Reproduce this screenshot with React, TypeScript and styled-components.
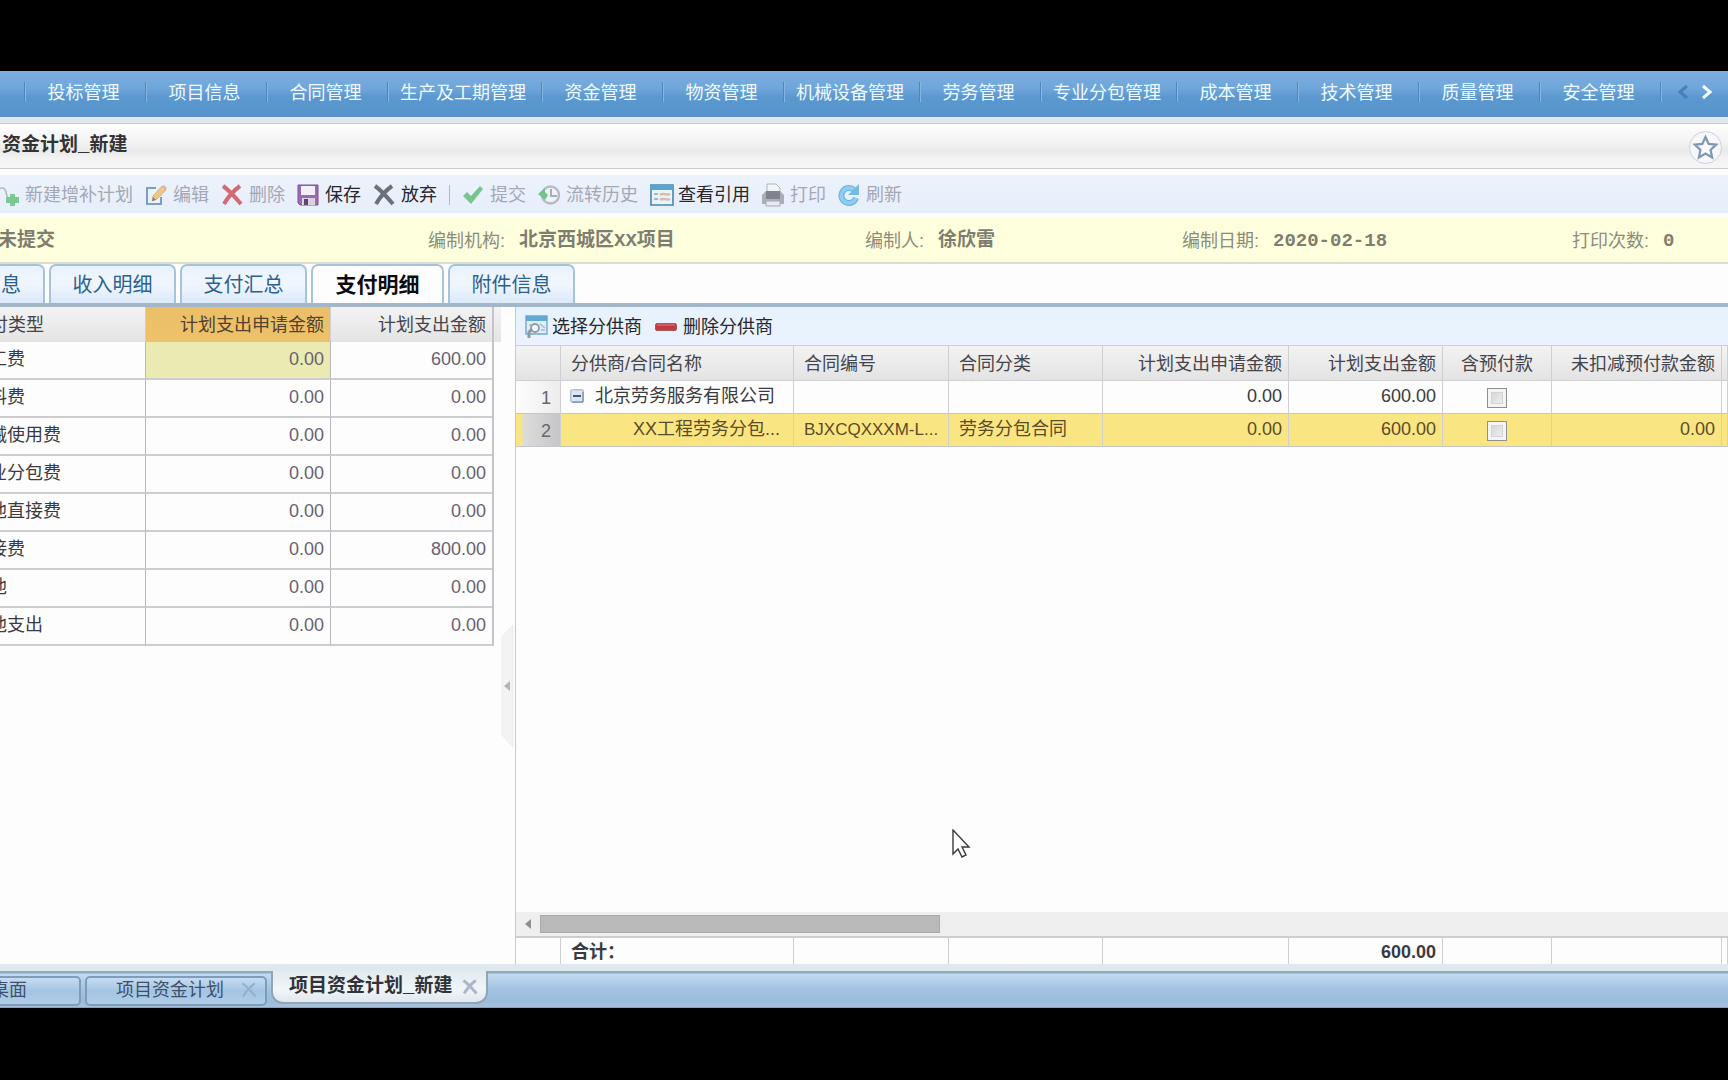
import React from "react";
import styled, { createGlobalStyle, css } from "styled-components";

const GlobalStyle = createGlobalStyle`
  * { box-sizing: border-box; }
  html, body { margin: 0; background: #000; overflow: hidden; }
  button, input { font: inherit; color: inherit; margin: 0; }
`;

const sans = `"Liberation Sans", "Noto Sans CJK SC", sans-serif`;
const mono = `"Liberation Mono", "Noto Sans CJK SC", monospace`;

const Screen = styled.div`
  position: relative;
  min-height: 100vh;
  padding: 71px 0 72px;
  display: flex;
  flex-direction: column;
  overflow: hidden;
  background: #000;
  font: 18px/24px ${sans};
  color: #3a3a40;
  white-space: nowrap;
`;

/* The window is scrolled slightly to the right, so its left edge is cut. */
const Frame = styled.div`
  flex: 1;
  margin-left: -16px;
  display: flex;
  flex-direction: column;
  background: #fdfdfe;
`;

const Nav = styled.nav`
  height: 46px;
  flex: none;
  display: flex;
  align-items: center;
  padding: 0 8px 2px 40px;
  background: linear-gradient(#7caee0 0, #6ea5da 18px, #5b98d0 26px, #5795cd 100%);
  border-bottom: 2px solid #5f90bf;
  overflow: hidden;
`;

const navCell = css`
  height: 20px;
  border-left: 1px solid #4f86bb;
  box-shadow: inset 1px 0 0 #86b5e2;
`;

const NavLink = styled.a`
  ${navCell}
  flex: none;
  min-width: 121px;
  padding: 0 15px 0 12px;
  line-height: 22px;
  text-align: center;
  text-decoration: none;
  color: #eefaff;
`;

const NavArrows = styled.div`
  ${navCell}
  flex: 1;
  display: flex;
  align-items: center;
  padding-left: 10px;
`;

const IconButton = styled.button`
  border: 0;
  padding: 0;
  background: none;
  display: flex;
  flex: none;
`;

const ArrowButton = styled(IconButton)`
  width: 24px;
  justify-content: center;
`;

const TitleBar = styled.header`
  flex: none;
  margin: 0;
  border-top: 6px solid #e0e7f1;
  background: #fdfdfe;
  padding-bottom: 6px;
`;

const TitleInner = styled.div`
  height: 46px;
  display: flex;
  align-items: center;
  justify-content: space-between;
  padding: 0 6px 0 18px;
  border-top: 1px solid #c9cbd0;
  border-bottom: 1px solid #c9cbd0;
  background: linear-gradient(#fefefe 0, #f3f3f4 18px, #e9e9ea 27px, #f3f3f4 34px, #f6f6f7 100%);
`;

const Title = styled.h1`
  margin: 0;
  font: bold 19px/24px ${mono};
  color: #333;
`;

const StarButton = styled(IconButton)`
  width: 33px;
  height: 33px;
  align-items: center;
  justify-content: center;
  border: 1px solid #ccd1dc;
  border-radius: 50%;
  background: #f5f7fb;
  margin-top: 2px;
`;

const Toolbar = styled.div`
  height: 38px;
  flex: none;
  display: flex;
  align-items: center;
  gap: 12px;
  padding: 2px 13px 0;
  background: linear-gradient(#edf3fc, #e6eefb);
`;

const ToolButton = styled.button<{ $wide?: boolean }>`
  border: 0;
  padding: 0;
  background: none;
  flex: none;
  display: flex;
  align-items: center;
  gap: ${(p) => (p.$wide ? 4 : 6)}px;
  color: #26262c;
  &:disabled { color: #a3a8b4; }
  &:disabled svg { opacity: 0.7; }
`;

const Divider = styled.span`
  width: 1px;
  height: 20px;
  background: #b4b9c4;
`;

const InfoBar = styled.dl`
  margin: 5px 0 0;
  height: 46px;
  flex: none;
  display: grid;
  grid-template-columns: 430fr 437fr 317fr 390fr 156fr;
  align-items: center;
  padding: 1px 0 0 14px;
  background: #feffdc;
  border-bottom: 2px solid #dcdccf;
  color: #8c8c7c;
`;

const InfoItem = styled.div`
  display: flex;
  gap: 14px;
`;

const InfoLabel = styled.dt``;

const InfoValue = styled.dd`
  margin: 0;
  font: bold 19px/24px ${mono};
  color: #7e7e70;
`;

const Tabs = styled.div`
  height: 43px;
  flex: none;
  display: flex;
  align-items: flex-end;
  gap: 4px;
  border-bottom: 4px solid #a3b7c8;
  background: #fdfdfe;
`;

const Tab = styled.button<{ $active?: boolean; $first?: boolean }>`
  height: 39px;
  flex: none;
  width: ${(p) => (p.$first ? 61 : p.$active ? 133 : 127)}px;
  padding: 0 ${(p) => (p.$first ? 22 : 0)}px 0 0;
  text-align: ${(p) => (p.$first ? "right" : "center")};
  border: 2px solid #a5c3da;
  border-bottom: 0;
  border-radius: 7px 7px 0 0;
  background: ${(p) => (p.$active ? "#fdfdfe" : "linear-gradient(#e9f3fd, #f0f6fe 50%, #dbe9fa)")};
  color: ${(p) => (p.$active ? "#0c0c10" : "#2d618f")};
  font-size: ${(p) => (p.$active ? 21 : 20)}px;
  font-weight: ${(p) => (p.$active ? "bold" : "normal")};
`;

const Content = styled.main`
  flex: 1;
  display: flex;
  min-height: 0;
`;

const LeftPane = styled.section`
  width: 517px;
  flex: none;
`;

const HeaderFill = styled.div`
  background: linear-gradient(#f3f3f4, #e4e4e5);
  height: 35px;
`;

const Grid = styled.table`
  border-collapse: separate;
  border-spacing: 0;
  table-layout: fixed;
  width: 100%;
`;

const SummaryGrid = styled(Grid)`
  width: 510px;
  margin-top: -35px;
  border-right: 2px solid #c4c4ca;
`;

const SumHead = styled.th<{ $right?: boolean; $hot?: boolean }>`
  height: 35px;
  padding: 0 6px 0 5px;
  font-weight: normal;
  text-align: ${(p) => (p.$right ? "right" : "left")};
  color: #44444a;
  border-left: 1px solid ${(p) => (p.$right ? "#cfcfd2" : "transparent")};
  ${(p) => p.$hot && "background: linear-gradient(#ebbf68, #eec26b); color: #54412c;"}
`;

const SumCell = styled.td<{ $right?: boolean; $hot?: boolean }>`
  height: 38px;
  padding: 0 6px 2px 5px;
  text-align: ${(p) => (p.$right ? "right" : "left")};
  color: ${(p) => (p.$right ? "#6a5f70" : "#3a3a40")};
  border-bottom: 2px solid #cdcdd0;
  border-left: ${(p) => (p.$right ? "1px solid #b9b9bd" : "0")};
  ${(p) => p.$hot && "background: #ebeab2;"}
`;

const Splitter = styled.div`
  width: 14px;
  flex: none;
  display: flex;
  align-items: center;
  padding-top: 100px;
`;

const RightPane = styled.section`
  flex: 1;
  min-width: 0;
  display: flex;
  flex-direction: column;
  overflow: hidden;
  border-left: 1px solid #c5c9d0;
`;

const PaneToolbar = styled.div`
  height: 38px;
  flex: none;
  display: flex;
  align-items: center;
  gap: 13px;
  padding: 2px 8px 0;
  background: linear-gradient(#e6f2fd, #ecf2fd);
`;

const GridScroll = styled.div`
  flex: 1;
`;

type CellProps = { $align?: "left" | "right" | "center" };

const Head = styled.th<CellProps>`
  height: 36px;
  padding: 1px 6px 0 10px;
  font-weight: normal;
  text-align: ${(p) => p.$align ?? "left"};
  color: #44444a;
  background: linear-gradient(#f3f3f4, #e3e3e4);
  border: 1px solid #cfcfd3;
  border-left: 0;
  ${(p) => p.$align === "center" && "padding: 1px 0 0;"}
`;

const Row = styled.tr<{ $selected?: boolean }>`
  background: ${(p) => (p.$selected ? "#fae583" : "#fdfdfe")};
  color: ${(p) => (p.$selected ? "#5a4c28" : "#3a3a40")};
`;

const Cell = styled.td<CellProps & { $indent?: number }>`
  height: 33px;
  padding: 0 6px 2px ${(p) => p.$indent ?? 10}px;
  text-align: ${(p) => p.$align ?? "left"};
  border-right: 1px solid #cfcfd3;
  border-bottom: 1px solid #c6c6ca;
  overflow: hidden;
  ${(p) => p.$align === "center" && "padding: 2px 0 0;"}
`;

const NumberCell = styled.th<{ $selected?: boolean }>`
  height: 33px;
  padding: 2px 9px 0 0;
  font-weight: normal;
  text-align: right;
  color: #66666c;
  border-right: 1px solid #cfcfd3;
  border-bottom: 1px solid #c6c6ca;
  background: ${(p) =>
    p.$selected
      ? "linear-gradient(90deg, #fae583 0, #fae583 6px, #dcdcdc 7px, #c6c6c8 100%)"
      : "linear-gradient(90deg, #fdfdfe, #ececed)"};
`;

const TreeLabel = styled.span`
  display: flex;
  align-items: center;
  gap: 11px;
  margin-left: -1px;
`;

const Code = styled.span`
  font-size: 17px;
`;

const Check = styled.input`
  appearance: none;
  display: block;
  width: 20px;
  height: 20px;
  margin: 0 auto;
  border: 1px solid #8f8f92;
  background: linear-gradient(135deg, #cfcfd0, #f6f6f6);
  box-shadow: inset 0 0 0 3px #f4f4f4, inset 0 0 0 4px #d4d4d6;
`;

const ScrollBar = styled.div`
  height: 24px;
  flex: none;
  display: flex;
  align-items: center;
  background: #efefef;
`;

const ScrollThumb = styled.div`
  width: 33%;
  height: 18px;
  background: #bababa;
  border: 1px solid #a9a9a9;
`;

const ScrollArrow = styled(IconButton)`
  width: 24px;
  justify-content: center;
`;

const FootCell = styled.td<CellProps>`
  height: 28px;
  padding: 1px 6px 0 10px;
  font-weight: bold;
  text-align: ${(p) => p.$align ?? "left"};
  border-top: 2px solid #cdcdcf;
  border-right: 1px solid #cfcfd3;
`;

const TaskBar = styled.footer`
  height: 44px;
  flex: none;
  display: flex;
  align-items: flex-start;
  gap: 4px;
  border-top: 7px solid #dfe8ec;
  border-bottom: 1px solid #88a3c0;
  background: linear-gradient(#8fabc4 0, #8fabc4 2px, #c3daf0 3px, #a2c4e2 18px, #9bbcdc 30px, #a9c0dd 100%);
`;

const TaskTab = styled.button<{ $width: number; $active?: boolean }>`
  width: ${(p) => p.$width}px;
  height: 30px;
  flex: none;
  margin-top: 5px;
  padding: 0 8px 2px 5px;
  display: flex;
  align-items: center;
  justify-content: space-between;
  border: 2px solid #7f9dbb;
  border-radius: 5px;
  background: linear-gradient(#c6dcf1, #a3c5e3 50%, #b0cde8);
  color: #40506a;
  ${(p) =>
    p.$active &&
    css`
      height: 33px;
      margin-top: 0;
      padding: 1px 8px 0 16px;
      border-top: 0;
      border-color: #93a5b5;
      border-radius: 0 0 12px 12px;
      background: linear-gradient(#e2ebef, #f0f5f8 60%, #dfe8ee);
      color: #303338;
      font: bold 19px/24px ${mono};
    `}
`;

const TaskLabel = styled.span<{ $indent?: boolean }>`
  padding-left: ${(p) => (p.$indent ? 24 : 0)}px;
`;

const Pointer = styled.svg`
  position: absolute;
  left: 952px;
  top: 829px;
`;

/* ---- icons ---- */

const Chevron = ({ dir, color }: { dir: "left" | "right"; color: string }) => (
  <svg width="12" height="16" viewBox="0 0 12 16" fill="none" stroke={color} strokeWidth="3">
    <path d={dir === "left" ? "M10 2 3 8l7 6" : "M2 2l7 6-7 6"} />
  </svg>
);

const Star = () => (
  <svg width="27" height="27" viewBox="0 0 24 24" fill="#f7f9fc" stroke="#8296b3" strokeWidth="2">
    <path d="M12 2.6l2.8 6.2 6.7.7-5 4.6 1.4 6.7-5.9-3.4-5.9 3.4 1.4-6.7-5-4.6 6.7-.7z" />
  </svg>
);

const AddPlanIcon = () => (
  <svg width="22" height="22" viewBox="0 0 22 22" fill="none">
    <path d="M0 8c3-5 7-6 9 0 1 4 1 6 3 7" stroke="#9a9ea8" strokeWidth="1.5" />
    <path d="M13 10h5v3h4v6h-4v3h-5v-3h-4v-6h4z" fill="#4fb868" />
  </svg>
);

const EditIcon = () => (
  <svg width="22" height="22" viewBox="0 0 22 22" fill="none">
    <path d="M11 4H2v16h14v-7" stroke="#4a7eae" strokeWidth="2" fill="#eef4fb" />
    <path d="M8 12l9-10 4 4-9 9-5 2z" fill="#f0b850" stroke="#bb8f50" strokeWidth=".8" />
    <path d="M17 2l4 4 1-2-3-3z" fill="#e59a8c" />
    <path d="M7 17l1-4 3 3z" fill="#555" />
  </svg>
);

const CrossIcon = ({ color, size = 22, width = 4 }: { color: string; size?: number; width?: number }) => (
  <svg width={size} height={size} viewBox="0 0 22 22" fill="none" stroke={color} strokeWidth={width}>
    <path d="M2 2c6 4 12 11 18 18M19 2C12 7 7 13 3 20" />
  </svg>
);

const SaveIcon = () => (
  <svg width="22" height="22" viewBox="0 0 22 22">
    <path d="M1 1h20v20H3l-2-2z" fill="#9a6bb5" stroke="#7a5596" />
    <path d="M4 2h14v9H4z" fill="#f4eef8" />
    <path d="M5 14h13v7H5z" fill="#d9d3e0" />
    <path d="M7 15h4v6H7z" fill="#5f4378" />
  </svg>
);

const TickIcon = () => (
  <svg width="22" height="22" viewBox="0 0 22 22">
    <path d="M1 12l4-4 4 4L18 2l3 3L9 20z" fill="#4bb262" />
  </svg>
);

const HistoryIcon = () => (
  <svg width="22" height="22" viewBox="0 0 22 22" fill="none">
    <circle cx="12.5" cy="11" r="8.5" stroke="#a0a5ae" strokeWidth="2.4" fill="#f1f4f8" />
    <path d="M13 5v7h6" stroke="#8d929b" strokeWidth="2" />
    <path d="M0 10l7-6v4l3 3-3 5z" fill="#3fb05c" />
  </svg>
);

const WindowIcon = () => (
  <svg width="24" height="22" viewBox="0 0 24 22" fill="none">
    <path d="M1 1h22v20H1z" fill="#e9f3fa" stroke="#4788b0" strokeWidth="1.6" />
    <path d="M1 1h22v5H1z" fill="#58a5ce" />
    <path d="M4 10h4M4 15h4" stroke="#9fb8cf" strokeWidth="2" />
    <path d="M10 11c3-3 5 1 10-1M10 16c3-3 6 1 10-1" stroke="#dcb8a6" strokeWidth="2.4" />
  </svg>
);

const PrintIcon = () => (
  <svg width="22" height="24" viewBox="0 0 22 24">
    <path d="M5 1h9l4 4v8H5z" fill="#f6f6f8" stroke="#9a9aa2" />
    <path d="M0 12l4-4v5h14V8l4 4v9H0z" fill="#90939b" />
    <path d="M4 8h14v8H4z" fill="#54565e" />
    <path d="M4 18h14v5H4z" fill="#e8e8ec" stroke="#8d8f97" />
  </svg>
);

const RefreshIcon = () => (
  <svg width="22" height="22" viewBox="0 0 22 22" fill="none">
    <path d="M16 6a7.5 7.5 0 1 0 2 8" stroke="#3c9fd8" strokeWidth="6" />
    <path d="M16 6a7.5 7.5 0 1 0 2 8" stroke="#6cc0ec" strokeWidth="3.4" />
    <path d="M21 0v11H10z" fill="#43a4da" />
  </svg>
);

const PickIcon = () => (
  <svg width="24" height="24" viewBox="0 0 24 24" fill="none">
    <path d="M2 1h21v18H2z" fill="#deedf8" stroke="#7ba6c8" strokeWidth="1.4" />
    <path d="M2 1h21v5H2z" fill="#63a9d3" />
    <path d="M5 10h4M16 9l5 4M17 15h4" stroke="#9dbbd3" strokeWidth="1.5" />
    <circle cx="11" cy="13" r="4" fill="#f0f6fb" stroke="#8d9bab" strokeWidth="1.8" />
    <path d="M8 14l-3 3v6" stroke="#8d9bab" strokeWidth="3" />
  </svg>
);

const MinusIcon = () => (
  <svg width="22" height="8" viewBox="0 0 22 8">
    <rect x=".5" y=".5" width="21" height="7" rx="1.5" fill="#c2393f" stroke="#a65a60" />
    <path d="M2 2h18" stroke="#dc7e80" />
  </svg>
);

const CollapseIcon = () => (
  <svg width="14" height="14" viewBox="0 0 14 14">
    <rect x=".7" y=".7" width="12.6" height="12.6" rx="2" fill="#dbe5f2" stroke="#b3bfd2" strokeWidth="1.4" />
    <path d="M3 7h8" stroke="#45557c" strokeWidth="2" />
    <path d="M2 13h11V3" stroke="#71809c" fill="none" />
  </svg>
);

/* ---- data ---- */

const navItems = [
  "投标管理", "项目信息", "合同管理", "生产及工期管理", "资金管理", "物资管理", "机械设备管理",
  "劳务管理", "专业分包管理", "成本管理", "技术管理", "质量管理", "安全管理",
];

const info: [string, string][] = [
  ["编制机构:", "北京西城区XX项目"],
  ["编制人:", "徐欣雷"],
  ["编制日期:", "2020-02-18"],
  ["打印次数:", "0"],
];

const summary: [string, string, string][] = [
  ["工费", "0.00", "600.00"],
  ["料费", "0.00", "0.00"],
  ["械使用费", "0.00", "0.00"],
  ["业分包费", "0.00", "0.00"],
  ["他直接费", "0.00", "0.00"],
  ["接费", "0.00", "800.00"],
  ["他", "0.00", "0.00"],
  ["他支出", "0.00", "0.00"],
];

const DetailColumns = () => (
  <colgroup>
    {[45, 233, 155, 154, 186, 154, 109, 170].map((w, i) => (
      <col key={i} width={w} />
    ))}
    <col />
  </colgroup>
);

export default function App() {
  return (
    <>
      <GlobalStyle />
      <Screen>
        <Frame>
          <Nav>
            {navItems.map((item) => (
              <NavLink key={item} href="#">{item}</NavLink>
            ))}
            <NavArrows>
              <ArrowButton aria-label="向左"><Chevron dir="left" color="#4a7fb3" /></ArrowButton>
              <ArrowButton aria-label="向右"><Chevron dir="right" color="#f4fbff" /></ArrowButton>
            </NavArrows>
          </Nav>

          <TitleBar>
            <TitleInner>
              <Title>资金计划_新建</Title>
              <StarButton aria-label="收藏"><Star /></StarButton>
            </TitleInner>
          </TitleBar>

          <Toolbar>
            <ToolButton disabled><AddPlanIcon />新建增补计划</ToolButton>
            <ToolButton disabled><EditIcon />编辑</ToolButton>
            <ToolButton disabled><CrossIcon color="#c8323c" />删除</ToolButton>
            <ToolButton><SaveIcon />保存</ToolButton>
            <ToolButton><CrossIcon color="#6c7179" />放弃</ToolButton>
            <Divider />
            <ToolButton disabled><TickIcon />提交</ToolButton>
            <ToolButton disabled><HistoryIcon />流转历史</ToolButton>
            <ToolButton $wide><WindowIcon />查看引用</ToolButton>
            <ToolButton disabled><PrintIcon />打印</ToolButton>
            <ToolButton disabled><RefreshIcon />刷新</ToolButton>
          </Toolbar>

          <InfoBar>
            <InfoItem><InfoValue>未提交</InfoValue></InfoItem>
            {info.map(([label, value]) => (
              <InfoItem key={label}>
                <InfoLabel>{label}</InfoLabel>
                <InfoValue>{value}</InfoValue>
              </InfoItem>
            ))}
          </InfoBar>

          <Tabs role="tablist">
            <Tab role="tab" $first>息</Tab>
            <Tab role="tab">收入明细</Tab>
            <Tab role="tab">支付汇总</Tab>
            <Tab role="tab" aria-selected $active>支付明细</Tab>
            <Tab role="tab">附件信息</Tab>
          </Tabs>

          <Content>
            <LeftPane>
              <HeaderFill />
              <SummaryGrid>
                <colgroup>
                  <col width="161" />
                  <col width="185" />
                  <col />
                </colgroup>
                <thead>
                  <tr>
                    <SumHead>付类型</SumHead>
                    <SumHead $right $hot>计划支出申请金额</SumHead>
                    <SumHead $right>计划支出金额</SumHead>
                  </tr>
                </thead>
                <tbody>
                  {summary.map(([name, asked, planned], i) => (
                    <tr key={name}>
                      <SumCell>{name}</SumCell>
                      <SumCell $right $hot={i === 0}>{asked}</SumCell>
                      <SumCell $right>{planned}</SumCell>
                    </tr>
                  ))}
                </tbody>
              </SummaryGrid>
            </LeftPane>

            <Splitter>
              <IconButton aria-label="折叠">
                <svg width="13" height="124" viewBox="0 0 13 124">
                  <path d="M12 1L1 13v98l11 12z" fill="#f3f3f4" stroke="#ededef" />
                  <path d="M9 57v10l-6-5z" fill="#b5b5b9" />
                </svg>
              </IconButton>
            </Splitter>

            <RightPane>
              <PaneToolbar>
                <ToolButton $wide><PickIcon />选择分供商</ToolButton>
                <ToolButton><MinusIcon />删除分供商</ToolButton>
              </PaneToolbar>
              <GridScroll>
                <Grid>
                  <DetailColumns />
                  <thead>
                    <tr>
                      <Head />
                      <Head>分供商/合同名称</Head>
                      <Head>合同编号</Head>
                      <Head>合同分类</Head>
                      <Head $align="right">计划支出申请金额</Head>
                      <Head $align="right">计划支出金额</Head>
                      <Head $align="center">含预付款</Head>
                      <Head $align="right">未扣减预付款金额</Head>
                      <Head />
                    </tr>
                  </thead>
                  <tbody>
                    <Row>
                      <NumberCell>1</NumberCell>
                      <Cell><TreeLabel><CollapseIcon />北京劳务服务有限公司</TreeLabel></Cell>
                      <Cell />
                      <Cell />
                      <Cell $align="right">0.00</Cell>
                      <Cell $align="right">600.00</Cell>
                      <Cell $align="center"><Check type="checkbox" aria-label="含预付款" /></Cell>
                      <Cell />
                      <Cell />
                    </Row>
                    <Row $selected>
                      <NumberCell $selected>2</NumberCell>
                      <Cell $indent={72}>XX工程劳务分包...</Cell>
                      <Cell><Code>BJXCQXXXM-L...</Code></Cell>
                      <Cell>劳务分包合同</Cell>
                      <Cell $align="right">0.00</Cell>
                      <Cell $align="right">600.00</Cell>
                      <Cell $align="center"><Check type="checkbox" aria-label="含预付款" /></Cell>
                      <Cell $align="right">0.00</Cell>
                      <Cell />
                    </Row>
                  </tbody>
                </Grid>
              </GridScroll>
              <ScrollBar>
                <ScrollArrow aria-label="向左滚动">
                  <svg width="6" height="10" viewBox="0 0 6 10"><path d="M6 0v10L0 5z" fill="#8f8f93" /></svg>
                </ScrollArrow>
                <ScrollThumb />
              </ScrollBar>
              <Grid>
                <DetailColumns />
                <tbody>
                  <tr>
                    <FootCell />
                    <FootCell>合计：</FootCell>
                    <FootCell />
                    <FootCell />
                    <FootCell />
                    <FootCell $align="right">600.00</FootCell>
                    <FootCell />
                    <FootCell />
                    <FootCell />
                  </tr>
                </tbody>
              </Grid>
            </RightPane>
          </Content>

          <TaskBar>
            <TaskTab $width={97}><TaskLabel>桌面</TaskLabel></TaskTab>
            <TaskTab $width={182}>
              <TaskLabel $indent>项目资金计划</TaskLabel>
              <CrossIcon color="#93b0cc" size={16} width={3} />
            </TaskTab>
            <TaskTab $width={217} $active>
              <TaskLabel>项目资金计划_新建</TaskLabel>
              <CrossIcon color="#a9b7c6" size={16} width={4} />
            </TaskTab>
          </TaskBar>
        </Frame>
        <Pointer width="19" height="30" viewBox="0 0 19 30">
          <path d="M1 1v24l5-5 4 8 4-2-4-8h7z" fill="#fff" stroke="#3a3a3e" strokeWidth="1.4" />
        </Pointer>
      </Screen>
    </>
  );
}
